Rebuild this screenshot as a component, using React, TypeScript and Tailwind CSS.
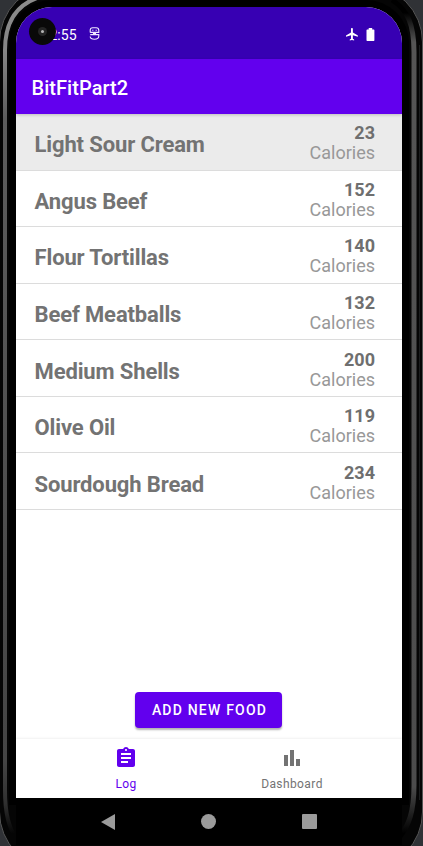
import React from "react";

const foods: [string, number][] = [
  ["Light Sour Cream", 23],
  ["Angus Beef", 152],
  ["Flour Tortillas", 140],
  ["Beef Meatballs", 132],
  ["Medium Shells", 200],
  ["Olive Oil", 119],
  ["Sourdough Bread", 234],
];

function PhoneFrame() {
  return (
    <svg className="absolute inset-0" width="423" height="846" viewBox="0 0 423 846" aria-hidden="true">
      <defs>
        <linearGradient id="rim" gradientUnits="userSpaceOnUse" x1="0" y1="0" x2="0" y2="846">
          <stop offset="0" stopColor="#8c8c8c" />
          <stop offset="0.06" stopColor="#858585" />
          <stop offset="0.14" stopColor="#5c5c5c" />
          <stop offset="0.9" stopColor="#444" />
          <stop offset="0.95" stopColor="#303030" />
          <stop offset="0.985" stopColor="#050505" />
        </linearGradient>
        <linearGradient id="rimRight" gradientUnits="userSpaceOnUse" x1="0" y1="0" x2="0" y2="846">
          <stop offset="0.015" stopColor="#000" />
          <stop offset="0.05" stopColor="#555" />
          <stop offset="0.93" stopColor="#4c4c4c" />
          <stop offset="0.985" stopColor="#000" />
        </linearGradient>
      </defs>
      <rect width="423" height="846" fill="#303236" />
      <rect x="-0.5" y="-15" width="423" height="884" rx="57" fill="#050505" stroke="#555" strokeWidth="1" />
      <path d="M40 -3 C17 4 5 22 5 50 V790 C5 815 9 826 16 840" fill="none" stroke="url(#rim)" strokeWidth="4" />
      <path d="M392 0 C408 10 414 25 414 52 V785 C414 812 409 825 399 838" fill="none" stroke="url(#rimRight)" strokeWidth="5" />
      <path d="M419.5 45V800" fill="none" stroke="#1c1e1f" strokeWidth="1" />
    </svg>
  );
}

function StatusBar() {
  return (
    <div className="relative flex h-[52px] shrink-0 items-center bg-[#3700b3] pt-[3px] text-white">
      <span className="ml-[30px] w-[30.5px] text-right text-[14px] leading-none">2:55</span>
      <svg className="-mt-[2px] ml-[12.5px]" width="11" height="13" viewBox="0 0 11 13" fill="none" stroke="#f0e8ff" strokeWidth="1.1">
        <path d="M1.2 5.4V3.5Q1.2 0.8 3.7 0.8H7.3Q9.8 0.8 9.8 3.5V5.4H1.2" />
        <path d="M3.2 3.2H4.4M6.6 3.2H7.8M4.5 5.4V6.6H6.5V5.4M1.2 7.6H9.8V9Q9.8 12.2 5.5 12.2Q1.2 12.2 1.2 9.5" />
      </svg>
      <svg className="ml-auto" width="12.5" height="12.5" viewBox="2 2 20 20" fill="white">
        <path d="M21 16v-2l-8-5V3.5c0-.83-.67-1.5-1.5-1.5S10 2.67 10 3.5V9l-8 5v2l8-2.5V19l-2 1.5V22l3.5-1 3.5 1v-1.5L13 19v-5.5l8 2.5z" />
      </svg>
      <svg className="-mt-[1px] ml-[8px] mr-[27px]" width="9" height="13" viewBox="0 0 9 13" fill="white">
        <path d="M0.5 2.2Q0.5 1.5 1.2 1.5H2.7V0H6.2V1.5H7.7Q8.4 1.5 8.4 2.2V12.3Q8.4 13 7.7 13H1.2Q0.5 13 0.5 12.3Z" />
      </svg>
      <div className="absolute left-[13px] top-[11px] flex h-[27px] w-[27px] items-center justify-center rounded-full bg-[#090909]">
        <div className="flex h-[9px] w-[9px] items-center justify-center rounded-full bg-[#252525]">
          <div className="h-[3px] w-[3px] rounded-full bg-[#b5b5b5]" />
        </div>
      </div>
    </div>
  );
}

export default function App() {
  return (
    <div className="relative h-[846px] w-[423px] overflow-hidden font-[Roboto,sans-serif]">
      <PhoneFrame />
      <div className="relative flex h-full flex-col pl-[16px] pr-[21px] pt-[7px]">
        <div className="flex h-[791px] shrink-0 flex-col overflow-hidden rounded-t-[36px] bg-white shadow-[0_0_0_7px_#000]">
          <StatusBar />
          <header className="relative z-10 flex h-[55px] shrink-0 items-center bg-[#6200ee] pl-[15.5px] pt-[3px] text-[20px] font-medium text-white shadow-[0_1px_3px_rgba(0,0,0,0.2)]">
            <span className="tracking-[0.05px]">BitFitPart2</span>
          </header>
          <main className="flex flex-1 flex-col">
            <ul>
              {foods.map(([name, calories], i) => (
                <li
                  key={name}
                  className={`flex h-[56.57px] items-center justify-between border-b border-[#dcdcdc] pl-[18.5px] pr-[27px] ${i === 0 ? "bg-[#ebebeb]" : "bg-white"}`}
                >
                  <span className="pt-[7px] text-[22px] font-bold leading-[26px] tracking-[-0.13px] text-[#737373]">{name}</span>
                  <span className="flex flex-col items-end pt-[3px] text-[18px] leading-[20px]">
                    <b className="text-[#6f6f6f]">{calories}</b>
                    <span className="text-[#989898]">Calories</span>
                  </span>
                </li>
              ))}
            </ul>
            <button className="mb-[11px] ml-[119px] mt-auto flex h-[36px] w-[147px] items-center justify-center rounded-[4px] bg-[#6200ee] pl-[2px] text-[14px] font-medium tracking-[1.2px] text-white shadow-[0_2px_2px_rgba(0,0,0,0.3)]">
              ADD NEW FOOD
            </button>
          </main>
          <nav className="flex h-[59px] shrink-0 pl-[27px] pr-[27px] text-[12px] tracking-[0.4px] shadow-[0_-1px_2px_rgba(0,0,0,0.06)]">
            <div className="flex flex-1 flex-col items-center pt-[7px] text-[#6200ee]">
              <svg width="24" height="24" viewBox="0 0 24 24" fill="currentColor">
                <path d="M19 3h-4.18C14.4 1.84 13.3 1 12 1c-1.3 0-2.4.84-2.82 2H5c-1.1 0-2 .9-2 2v14c0 1.1.9 2 2 2h14c1.1 0 2-.9 2-2V5c0-1.1-.9-2-2-2zm-7 0c.55 0 1 .45 1 1s-.45 1-1 1-1-.45-1-1 .45-1 1-1zm2 14H7v-2h7v2zm3-4H7v-2h10v2zm0-4H7V7h10v2z" />
              </svg>
              <span className="mt-[6px] leading-[16px]">Log</span>
            </div>
            <div className="flex flex-1 flex-col items-center pt-[7px] text-[#737373]">
              <svg width="24" height="24" viewBox="0 0 24 24" fill="currentColor">
                <path d="M4 9h4v11H4zM16 13h4v7h-4zM10 4h4v16h-4z" />
              </svg>
              <span className="mt-[6px] leading-[16px]">Dashboard</span>
            </div>
          </nav>
        </div>
        <div className="flex h-[47px] shrink-0 items-center justify-between bg-black pl-[84.5px] pr-[85px]">
          <svg width="15" height="16" viewBox="0 0 15 16" fill="#9b9b9b"><path d="M0 8L14 0V16Z" /></svg>
          <div className="h-[15px] w-[15px] rounded-full bg-[#9b9b9b]" />
          <div className="h-[15px] w-[15px] rounded-[1px] bg-[#9b9b9b]" />
        </div>
      </div>
    </div>
  );
}
